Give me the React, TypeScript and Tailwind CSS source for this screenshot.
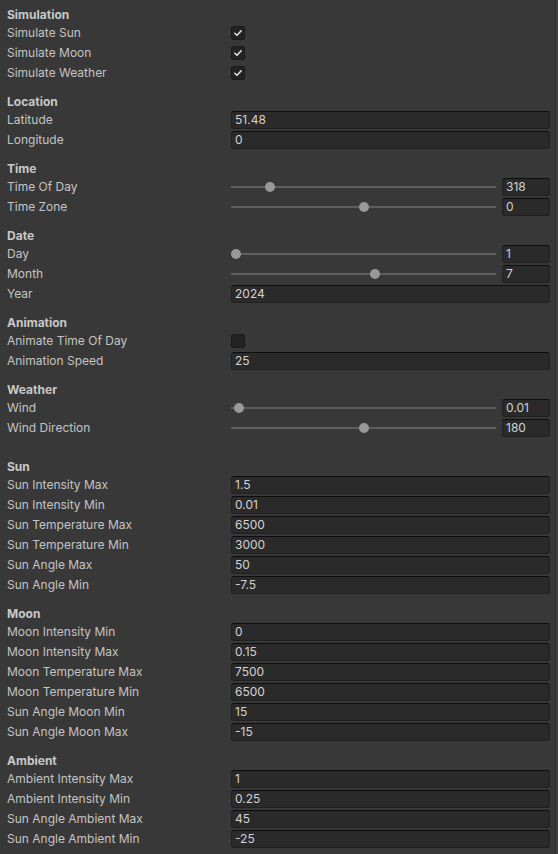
import React from "react";

type Field =
  | { kind: "check"; label: string; value: boolean }
  | { kind: "text"; label: string; value: string }
  | { kind: "slider"; label: string; value: string; frac: number };

type Section = { title: string; mt: string; fields: Field[] };

const sections: Section[] = [
  {
    title: "Simulation",
    mt: "mt-0",
    fields: [
      { kind: "check", label: "Simulate Sun", value: true },
      { kind: "check", label: "Simulate Moon", value: true },
      { kind: "check", label: "Simulate Weather", value: true },
    ],
  },
  {
    title: "Location",
    mt: "mt-[9px]",
    fields: [
      { kind: "text", label: "Latitude", value: "51.48" },
      { kind: "text", label: "Longitude", value: "0" },
    ],
  },
  {
    title: "Time",
    mt: "mt-[9px]",
    fields: [
      { kind: "slider", label: "Time Of Day", value: "318", frac: 318 / 2400 },
      { kind: "slider", label: "Time Zone", value: "0", frac: 0.5 },
    ],
  },
  {
    title: "Date",
    mt: "mt-[9px]",
    fields: [
      { kind: "slider", label: "Day", value: "1", frac: 0 },
      { kind: "slider", label: "Month", value: "7", frac: 6 / 11 },
      { kind: "text", label: "Year", value: "2024" },
    ],
  },
  {
    title: "Animation",
    mt: "mt-[9px]",
    fields: [
      { kind: "check", label: "Animate Time Of Day", value: false },
      { kind: "text", label: "Animation Speed", value: "25" },
    ],
  },
  {
    title: "Weather",
    mt: "mt-[9px]",
    fields: [
      { kind: "slider", label: "Wind", value: "0.01", frac: 0.01 },
      { kind: "slider", label: "Wind Direction", value: "180", frac: 0.5 },
    ],
  },
  {
    title: "Sun",
    mt: "mt-[19px]",
    fields: [
      { kind: "text", label: "Sun Intensity Max", value: "1.5" },
      { kind: "text", label: "Sun Intensity Min", value: "0.01" },
      { kind: "text", label: "Sun Temperature Max", value: "6500" },
      { kind: "text", label: "Sun Temperature Min", value: "3000" },
      { kind: "text", label: "Sun Angle Max", value: "50" },
      { kind: "text", label: "Sun Angle Min", value: "-7.5" },
    ],
  },
  {
    title: "Moon",
    mt: "mt-[9px]",
    fields: [
      { kind: "text", label: "Moon Intensity Min", value: "0" },
      { kind: "text", label: "Moon Intensity Max", value: "0.15" },
      { kind: "text", label: "Moon Temperature Max", value: "7500" },
      { kind: "text", label: "Moon Temperature Min", value: "6500" },
      { kind: "text", label: "Sun Angle Moon Min", value: "15" },
      { kind: "text", label: "Sun Angle Moon Max", value: "-15" },
    ],
  },
  {
    title: "Ambient",
    mt: "mt-[9px]",
    fields: [
      { kind: "text", label: "Ambient Intensity Max", value: "1" },
      { kind: "text", label: "Ambient Intensity Min", value: "0.25" },
      { kind: "text", label: "Sun Angle Ambient Max", value: "45" },
      { kind: "text", label: "Sun Angle Ambient Min", value: "-25" },
    ],
  },
];

function TextBox({ value, className = "" }: { value: string; className?: string }) {
  return (
    <div
      className={`h-[18px] rounded-[3px] bg-[#2a2a2a] border border-[#212121] border-t-[#0d0d0d] pl-[3px] flex items-center text-[#d2d2d2] leading-[16px] ${className}`}
    >
      {value}
    </div>
  );
}

function Check({ on }: { on: boolean }) {
  return (
    <div className="w-[14px] h-[14px] rounded-[2px] bg-[#232323] border border-[#191919] flex items-center justify-center">
      {on && (
        <svg width="10" height="10" viewBox="0 0 10 10">
          <path d="M1.8 5.2 L4 7.3 L8.2 2.8" fill="none" stroke="#e6e6e6" strokeWidth="1.5" strokeLinecap="round" strokeLinejoin="round" />
        </svg>
      )}
    </div>
  );
}

function Slider({ value, frac }: { value: string; frac: number }) {
  return (
    <div className="flex items-center gap-[6px] h-[18px]">
      <div className="relative flex-1 h-[18px]">
        <div className="absolute left-0 right-0 top-[8px] h-[2px] bg-[#5e5e5e]" />
        <div
          className="absolute top-[4px] w-[10px] h-[10px] rounded-full bg-[#999999]"
          style={{ left: `calc(${frac} * (100% - 10px))` }}
        />
      </div>
      <TextBox value={value} className="w-[48px]" />
    </div>
  );
}

export default function App() {
  return (
    <div
      className="w-[558px] h-[854px] bg-[#383838] flex overflow-hidden text-[12px] text-[#c4c4c4]"
      style={{ fontFamily: "Inter, 'Noto Sans', sans-serif" }}
    >
      <div className="flex-1 flex flex-col pt-[6px] pl-[7px] pr-[5px]">
        {sections.map((s) => (
          <div key={s.title} className={`flex flex-col ${s.mt}`}>
            <div className="h-[18px] leading-[18px] font-bold text-[#c8c8c8]">{s.title}</div>
            {s.fields.map((f) => (
              <div key={f.label} className="flex items-center h-[18px] mb-[2px]">
                <div className="w-[224px] shrink-0 leading-[18px]">{f.label}</div>
                <div className="flex-1">
                  {f.kind === "check" && <Check on={f.value} />}
                  {f.kind === "text" && <TextBox value={f.value} />}
                  {f.kind === "slider" && <Slider value={f.value} frac={f.frac} />}
                </div>
              </div>
            ))}
          </div>
        ))}
      </div>
      <div className="w-[3px] h-full border-l border-[#2c2c2c] bg-[#404040]" />
    </div>
  );
}
